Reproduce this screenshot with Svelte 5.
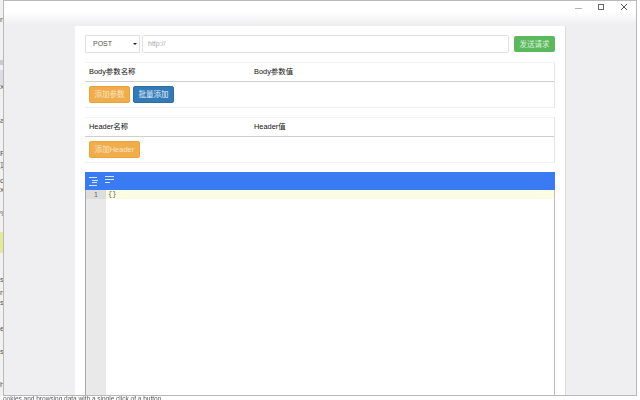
<script>
  const marks = [
    { top: 16, h: 8, t: 'n' },
    { top: 60, h: 5, c: 'grey' },
    { top: 70, h: 15, c: 'soft' },
    { top: 83, h: 8, t: 'x' },
    { top: 117, h: 8, t: 'a' },
    { top: 150, h: 8, t: 'P' },
    { top: 163, h: 8, t: '功' },
    { top: 177, h: 8, t: 'c' },
    { top: 186, h: 8, t: 'x' },
    { top: 210, h: 8, t: '%' },
    { top: 232, h: 21, c: 'lime' },
    { top: 276, h: 8, t: 's' },
    { top: 289, h: 8, t: 'n' },
    { top: 299, h: 8, t: 's' },
    { top: 325, h: 8, t: 'e' },
    { top: 348, h: 8, t: 's' },
    { top: 381, h: 8, t: 'h' }
  ];
  const gaps = marks.map((m, i) => ({
    ...m,
    gap: i === 0 ? m.top : m.top - marks[i - 1].top - marks[i - 1].h
  }));
</script>

<div class="shot">
  <div class="main">
    <div class="strip">
      {#each gaps as m}
        <span class={'mark ' + (m.c ?? '')} style={`margin-top:${m.gap}px;height:${m.h}px`}>{m.t ?? ''}</span>
      {/each}
    </div>
    <div class="window">
      <div class="titlebar">
        <span class="winbtn"><svg width="10" height="10" viewBox="0 0 10 10"><path d="M1 5.500h7" stroke="#b5b5b5" fill="none"/></svg></span>
        <span class="winbtn"><svg width="10" height="10" viewBox="0 0 10 10"><rect x="1.500" y="1.500" width="5" height="5" stroke="#666" fill="none"/></svg></span>
        <span class="winbtn"><svg width="10" height="10" viewBox="0 0 10 10"><path d="M1 1l6 6M7 1l-6 6" stroke="#555" fill="none"/></svg></span>
      </div>
      <div class="content">
        <div class="card">
          <div class="request">
            <div class="select">POST<i class="caret"></i></div>
            <div class="url">http://</div>
            <button class="btn green">发送请求</button>
          </div>

          <section class="params">
            <div class="head"><span>Body参数名称</span><span>Body参数值</span></div>
            <div class="actions">
              <button class="btn orange">添加参数</button>
              <button class="btn blue">批量添加</button>
            </div>
          </section>

          <section class="params second">
            <div class="head"><span>Header名称</span><span>Header值</span></div>
            <div class="actions">
              <button class="btn orange wide">添加Header</button>
            </div>
          </section>

          <div class="editor">
            <div class="toolbar">
              <svg class="i1" width="10" height="9" viewBox="0 0 10 9"><path d="M0 .500h8M3 3.500h6M3 5.500h5M0 8.500h8" stroke="#d5e6ff" fill="none"/></svg>
              <svg class="i2" width="9" height="7" viewBox="0 0 9 7"><path d="M0 .500h9M0 3.500h9M0 6.500h5" stroke="#d5e6ff" fill="none"/></svg>
            </div>
            <div class="code">
              <div class="gutter"><div class="num">1</div></div>
              <div class="lines"><div class="line">{'{}'}</div></div>
            </div>
          </div>
        </div>
      </div>
    </div>
    <div class="edge"></div>
  </div>
  <div class="under">ookies and browsing data with a single click of a button</div>
</div>

<style>
  :global(body) { margin: 0; background: #fff; }
  .shot {
    width: 640px; height: 400px; overflow: hidden;
    display: flex; flex-direction: column;
    font-family: "Liberation Sans", "Noto Sans CJK SC", sans-serif;
    filter: blur(0.35px);
  }
  .main { display: flex; height: 396px; flex: none; }
  .strip {
    width: 3px; flex: none; overflow: hidden; background: #f1f1f1;
    display: flex; flex-direction: column;
    font-size: 8px; line-height: 8px; color: #555;
  }
  .mark { display: block; flex: none; }
  .grey { background: #cacacd; }
  .soft { background: #dcdce4; }
  .lime { background: #e3ea9a; }
  .window {
    width: 634px; flex: none; display: flex; flex-direction: column; box-sizing: border-box;
    border: 1px solid #b9b9b9; background: #efeff1;
  }
  .titlebar {
    height: 25px; flex: none; box-sizing: border-box;
    background: linear-gradient(#fff 0, #fff 11px, #efeff1 24px);
    display: flex; justify-content: flex-end; align-items: flex-start;
    padding: 2px 6px 0 0; gap: 13px;
  }
  .winbtn { width: 10px; height: 10px; display: block; }
  .winbtn svg { display: block; }
  .content { flex: 1; min-height: 0; padding-left: 71px; overflow: hidden; }
  .card {
    width: 491px; height: 370px; box-sizing: border-box; background: #fff;
    border-right: 1px solid #dcdcdc;
    padding: 9px 10px 0;
    display: flex; flex-direction: column;
  }
  .request { display: flex; height: 18px; align-items: center; }
  .select {
    width: 55px; height: 18px; box-sizing: border-box; border: 1px solid #e2e2e2;
    font-size: 7px; line-height: 16px; color: #555; padding-left: 7px; position: relative;
  }
  .caret {
    position: absolute; right: 2px; top: 7px; width: 0; height: 0;
    border: 2px solid transparent; border-top: 2px solid #222; border-bottom: 0;
  }
  .url {
    width: 367px; height: 18px; margin-left: 2px; box-sizing: border-box;
    border: 1px solid #e2e2e2; border-radius: 2px;
    font-size: 7px; line-height: 16px; color: #aaa; padding-left: 5px;
  }
  .btn {
    border: 1px solid transparent; border-radius: 2px; color: #fff; padding: 0;
    font-family: inherit; font-size: 7.500px; display: block; height: 17px;
    width: 41px; line-height: 15px;
  }
  .green { background: #5cb85c; height: 16px; margin-left: 5px; color: #d8f2d8; }
  .orange { background: #f0ad4e; color: #fde5c0; border-color: #eea236; }
  .blue { background: #337ab7; border-color: #2e6da4; color: #e5f0fa; }
  .wide { width: 51px; }

  .params {
    margin-top: 9px; height: 46px; box-sizing: border-box; width: 470px;
    border-top: 1px solid #f3f3f3; border-bottom: 1px solid #efefef; border-right: 1px solid #e6e6e6;
  }
  .head {
    height: 19px; box-sizing: border-box; border-bottom: 1px solid #cfcfcf;
    display: flex; font-size: 7.400px; line-height: 18px; color: #111; padding-left: 4px;
  }
  .head span { width: 165px; display: block; }
  .actions { display: flex; gap: 3px; padding: 4px 0 0 4px; }

  .editor { margin-top: 9px; flex: 1; min-height: 0; display: flex; flex-direction: column; }
  .toolbar {
    height: 18px; flex: none; background: #3a7bf4; box-sizing: border-box;
    display: flex; gap: 6px; padding: 4px 0 0 4px;
  }
  .toolbar svg { display: block; }
  .i1 { margin-top: 1px; }
  .code {
    flex: 1; min-height: 0; display: flex; box-sizing: border-box;
    border-left: 1px solid #a9a9ad; border-right: 1px solid #bdbdbd;
  }
  .gutter { width: 20px; flex: none; background: #e9e9e9; }
  .num { height: 9px; background: #ddd; padding-right: 8px; font-size: 7px; line-height: 9px; color: #666; text-align: right; }
  .lines { flex: 1; }
  .line { height: 9px; background: #fbfde2; font-size: 7px; line-height: 9px; color: #666; padding-left: 2px; font-family: "Liberation Mono", monospace; }

  .edge { flex: 1; }
  .under {
    height: 4px; overflow: hidden; font-size: 6.500px; line-height: 5px; color: #555;
    padding-left: 3px; white-space: nowrap;
  }
</style>
